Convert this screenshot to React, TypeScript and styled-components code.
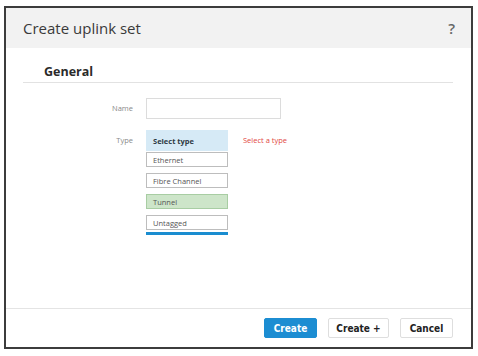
import * as React from "react";
import styled, { createGlobalStyle } from "styled-components";

const GlobalStyle = createGlobalStyle`
  html, body {
    margin: 0;
    padding: 0;
    background: #ffffff;
  }
  body {
    font-family: "Open Sans", "Noto Sans", sans-serif;
  }
`;

const Dialog = styled.div`
  box-sizing: border-box;
  margin: 6px 0 0 4px;
  width: 469px;
  height: 343px;
  border: 2px solid #3c3c3c;
  display: flex;
  flex-direction: column;
  background: #fff;
`;

const Header = styled.div`
  height: 40px;
  background: #f2f2f2;
  display: flex;
  align-items: center;
  justify-content: space-between;
  padding: 0 16px 0 17px;
`;

const Title = styled.h1`
  margin: 0;
  font-size: 15px;
  font-weight: 400;
  color: #3a3a3a;
`;

const Help = styled.span`
  font-size: 15px;
  font-weight: 600;
  color: #666;
`;

const Body = styled.div`
  flex: 1;
  padding: 16px 18px 0 17px;
`;

const SectionTitle = styled.h2`
  margin: 0;
  padding: 0 0 2px 21px;
  line-height: 16px;
  font-size: 12.5px;
  font-weight: 700;
  color: #2a2a2a;
  border-bottom: 1px solid #e2e2e2;
`;

const Form = styled.div`
  display: grid;
  grid-template-columns: 110px auto;
  column-gap: 13px;
  row-gap: 11px;
  margin-top: 15px;
  align-items: start;
`;

const Label = styled.label`
  font-size: 7.5px;
  color: #8a8a8a;
  text-align: right;
  line-height: 21px;
`;

const Input = styled.div`
  box-sizing: border-box;
  width: 135px;
  height: 21px;
  border: 1px solid #dcdcdc;
  background: #fff;
`;

const TypeRow = styled.div`
  display: flex;
  align-items: flex-start;
  gap: 15px;
`;

const Picker = styled.div`
  width: 82px;
  display: flex;
  flex-direction: column;
`;

const SelectBox = styled.div`
  height: 21px;
  background: #d6eaf6;
  display: flex;
  align-items: center;
  padding-left: 7px;
  font-size: 7.5px;
  font-weight: 700;
  color: #2f3b44;
`;

const Options = styled.div`
  display: flex;
  flex-direction: column;
`;

const Option = styled.div<{ $active?: boolean }>`
  box-sizing: border-box;
  height: 15px;
  margin-top: 6px;
  &:first-child {
    margin-top: 1px;
  }
  border: 1px solid ${(p) => (p.$active ? "#a8cda3" : "#bdbdbd")};
  background: ${(p) => (p.$active ? "#cde5c9" : "#fff")};
  display: flex;
  align-items: center;
  padding-left: 6px;
  font-size: 7.5px;
  color: #555;
`;

const Bar = styled.div`
  height: 3px;
  margin-top: 2px;
  background: #1a8dd0;
`;

const Error = styled.span`
  font-size: 7.5px;
  color: #e2483f;
  line-height: 21px;
`;

const Footer = styled.div`
  height: 38px;
  border-top: 1px solid #e4e4e4;
  display: flex;
  align-items: center;
  justify-content: flex-end;
  gap: 11px;
  padding-right: 18px;
`;

const Button = styled.button<{ $primary?: boolean; $width: number }>`
  box-sizing: border-box;
  width: ${(p) => p.$width}px;
  height: 20px;
  padding: 0;
  border-radius: 2px;
  font-family: "DejaVu Sans Condensed", "Roboto Condensed", "Liberation Sans", sans-serif;
  font-size: 10px;
  font-weight: 700;
  border: 1px solid ${(p) => (p.$primary ? "#1c8dd2" : "#dedede")};
  background: ${(p) => (p.$primary ? "#1c8dd2" : "#fff")};
  color: ${(p) => (p.$primary ? "#fff" : "#222")};
`;

const types = ["Ethernet", "Fibre Channel", "Tunnel", "Untagged"];

export default function App() {
  return (
    <>
      <GlobalStyle />
      <Dialog>
        <Header>
          <Title>Create uplink set</Title>
          <Help>?</Help>
        </Header>
        <Body>
          <SectionTitle>General</SectionTitle>
          <Form>
            <Label>Name</Label>
            <Input />
            <Label>Type</Label>
            <TypeRow>
              <Picker>
                <SelectBox>Select type</SelectBox>
                <Options>
                  {types.map((t) => (
                    <Option key={t} $active={t === "Tunnel"}>
                      {t}
                    </Option>
                  ))}
                </Options>
                <Bar />
              </Picker>
              <Error>Select a type</Error>
            </TypeRow>
          </Form>
        </Body>
        <Footer>
          <Button $primary $width={53}>Create</Button>
          <Button $width={61}>Create +</Button>
          <Button $width={53}>Cancel</Button>
        </Footer>
      </Dialog>
    </>
  );
}
